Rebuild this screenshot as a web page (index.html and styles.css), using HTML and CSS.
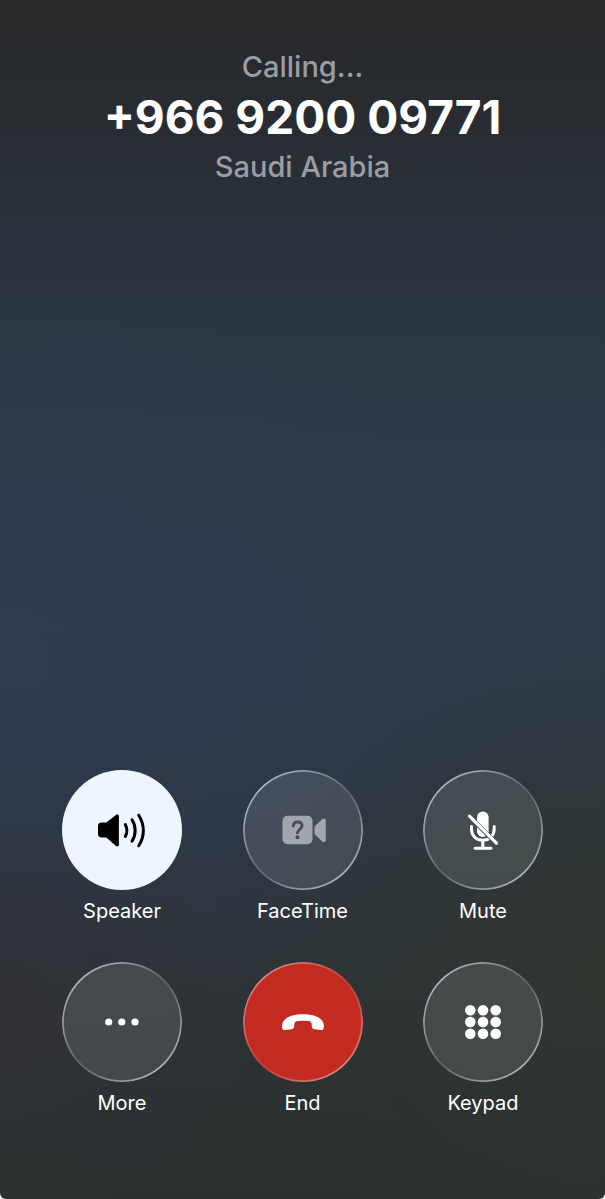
FILE: index.html
```html
<!DOCTYPE html>
<html lang="en">
<head>
  <meta charset="UTF-8" />
  <meta name="viewport" content="width=device-width, initial-scale=1.0" />
  <title>Calling...</title>
  <link rel="stylesheet" href="styles.css">
</head>
<body>
  <main class="call-screen">
    <!-- ===== caller ===== -->
    <header class="caller">
      <p class="caller-sub">Calling...</p>
      <h1 class="caller-number">+966 9200 09771</h1>
      <p class="caller-sub">Saudi Arabia</p>
    </header>

    <!-- ===== call controls ===== -->
    <div class="controls">
      <button type="button" class="control active">
        <span class="circle">
          <svg class="icon" viewBox="0 0 60 60" fill="none" stroke="#000" stroke-width="3" stroke-linecap="round">
            <path d="M9.500 22.500h4.800L24 14.900c1.200-.9 2.900-.3 2.900 1.300v28.600c0 1.600-1.700 2.200-2.900 1.200l-9.700-8.500H9.500C7.200 37.500 6 36.200 6 34v-8c0-2.200 1.200-3.500 3.500-3.500z" fill="#000" stroke="none" />
            <path d="M33.300 24.500c2 3.700 2 8.300 0 12" />
            <path d="M40 19.800c4.200 6.500 4.200 14.900 0 21.400" />
            <path d="M46.700 15.200c6.200 9.500 6.200 21.100 0 30.600" />
          </svg>
        </span>
        <span class="label">Speaker</span>
      </button>

      <button type="button" class="control" disabled>
        <span class="circle">
          <svg class="icon" viewBox="0 0 60 60" fill="#a2a5ac">
            <rect x="9.500" y="15.700" width="30" height="28.600" rx="5" />
            <path d="M41.500 26.500l7.700-7.300c1.400-1.200 3.600-.7 3.600 1.400v19.400c0 2.100-2.200 2.600-3.600 1.400l-7.700-7.300z" />
            <path d="M20.300 26c.2-2.600 1.900-4 4.300-4 2.600 0 4.400 1.500 4.400 3.800 0 3.600-4.500 3.600-4.500 7" fill="none" stroke="#46505b" stroke-width="3" stroke-linecap="round" />
            <circle cx="24.500" cy="37.200" r="2" fill="#46505b" />
          </svg>
        </span>
        <span class="label">FaceTime</span>
      </button>

      <button type="button" class="control">
        <span class="circle">
          <svg class="icon" viewBox="0 0 60 60" fill="none" stroke="#fff" stroke-width="3" stroke-linecap="round">
            <rect x="24" y="11.500" width="11.600" height="25.500" rx="5.800" fill="#fff" stroke="none" />
            <path d="M18.500 26.500v2.500c0 6.800 4.700 11.300 11.300 11.300S41.200 35.800 41.200 29v-2.500" />
            <path d="M29.800 40.500v7.500M22 48.200h16" />
            <path d="M18 18.200l27 26.600M14 14.200l4 4" stroke="#475055" stroke-width="4.500" stroke-linecap="butt" />
            <path d="M16.500 16.200l27 27" stroke-width="3.200" />
          </svg>
        </span>
        <span class="label">Mute</span>
      </button>

      <button type="button" class="control">
        <span class="circle">
          <svg class="icon" viewBox="0 0 60 60" fill="#fff">
            <circle cx="16.700" cy="30" r="3.600" />
            <circle cx="29.800" cy="30" r="3.600" />
            <circle cx="43" cy="30" r="3.600" />
          </svg>
        </span>
        <span class="label">More</span>
      </button>

      <button type="button" class="control end">
        <span class="circle">
          <svg class="icon" viewBox="0 0 60 60" fill="#fff">
            <path d="M30 22.200c7.300 0 13.500 1.500 17 4.200 3.400 2.600 4.400 6.200 3.700 9.500-.4 1.800-1.300 2.300-3 2.100l-6.300-.8c-1.500-.2-2.200-.9-2.400-2.300l-.5-3.400c-.2-1.200-.8-1.900-2-2.200-1.600-.4-3.700-.6-6.500-.6s-4.900.2-6.500.6c-1.200.3-1.800 1-2 2.200l-.5 3.400c-.2 1.400-.9 2.100-2.400 2.300l-6.300.8c-1.700.2-2.600-.3-3-2.100-.7-3.300.3-6.900 3.700-9.500 3.500-2.700 9.700-4.200 17-4.200z" />
          </svg>
        </span>
        <span class="label">End</span>
      </button>

      <button type="button" class="control">
        <span class="circle">
          <svg class="icon" viewBox="0 0 60 60" fill="#fff">
            <circle cx="17.300" cy="18.200" r="5.300" />
            <circle cx="30" cy="18.200" r="5.300" />
            <circle cx="42.700" cy="18.200" r="5.300" />
            <circle cx="17.300" cy="30" r="5.300" />
            <circle cx="30" cy="30" r="5.300" />
            <circle cx="42.700" cy="30" r="5.300" />
            <circle cx="17.300" cy="41.800" r="5.300" />
            <circle cx="30" cy="41.800" r="5.300" />
            <circle cx="42.700" cy="41.800" r="5.300" />
          </svg>
        </span>
        <span class="label">Keypad</span>
      </button>
    </div>
  </main>
</body>
</html>
```

FILE: styles.css
```css
body {
  margin: 0;
  font-family: Inter, 'Helvetica Neue', sans-serif;
  background-color: #fff;
}

.call-screen {
  min-height: 100vh;
  padding: 50px 62px 84px;
  box-sizing: border-box;
  display: flex;
  flex-direction: column;
  justify-content: space-between;
  border-radius: 0 0 6px 6px;
  background:
    radial-gradient(ellipse 60% 28% at 100% 80%, rgba(49, 54, 47, 0.85), rgba(49, 54, 47, 0)),
    radial-gradient(ellipse 45% 18% at 0% 84%, rgba(50, 49, 54, 0.8), rgba(50, 49, 54, 0)),
    radial-gradient(ellipse 90% 32% at 0% 55%, rgba(47, 59, 80, 0.7), rgba(47, 59, 80, 0)),
    linear-gradient(#272829 0%, #282b2f 8%, #2a3038 16%, #2c3640 26%, #2d3946 38%, #2e3a48 52%, #2d3846 63%, #2d363f 72%, #2d3437 82%, #2c3132 92%, #2c2f2f 100%);
}

/* caller */
.caller {
  text-align: center;
}
.caller-sub {
  margin: 0;
  font-size: 29px;
  font-weight: 500;
  line-height: 34px;
  color: #9b9da5;
}
.caller-number {
  margin: 0;
  font-size: 46px;
  font-weight: 700;
  line-height: 66px;
  color: #fff;
}

/* controls */
.controls {
  width: 100%;
  max-width: 560px;
  margin: 0 auto;
  display: grid;
  grid-template-columns: repeat(3, 120px);
  justify-content: space-between;
  row-gap: 39px;
}
.control {
  padding: 0;
  border: none;
  background: none;
  font-family: inherit;
  color: #fff;
  display: flex;
  flex-direction: column;
  align-items: center;
  gap: 9px;
  cursor: pointer;
}
.circle {
  position: relative;
  width: 120px;
  height: 120px;
  border-radius: 50%;
  background-color: rgba(255, 255, 255, 0.11);
  display: flex;
  justify-content: center;
  align-items: center;
}
/* thin rim, brighter at top left and bottom right */
.circle::before {
  content: '';
  position: absolute;
  inset: 0;
  border-radius: 50%;
  background: conic-gradient(rgba(208, 218, 228, 0.6), rgba(208, 218, 228, 0.15) 50deg, rgba(208, 218, 228, 0.55) 90deg, rgba(208, 218, 228, 0.75) 140deg, rgba(208, 218, 228, 0.55) 185deg, rgba(208, 218, 228, 0.2) 225deg, rgba(208, 218, 228, 0.55) 265deg, rgba(208, 218, 228, 0.75) 315deg, rgba(208, 218, 228, 0.6));
  -webkit-mask: radial-gradient(closest-side, transparent 96%, #000 98%);
  mask: radial-gradient(closest-side, transparent 96%, #000 98%);
}
.icon {
  width: 60px;
  height: 60px;
}
.label {
  font-size: 20px;
  line-height: 24px;
}
.control.active .circle {
  background-color: #edf6ff;
}
.control.active .circle::before {
  display: none;
}
.control.end .circle {
  background-color: #c42b20;
}
.control.end .circle::before {
  opacity: 0.7;
}
.control:disabled {
  cursor: default;
}

@media (max-width: 500px) {
  .call-screen {
    padding-left: 20px;
    padding-right: 20px;
  }
  .caller-number {
    font-size: 36px;
  }
  .controls {
    grid-template-columns: repeat(3, 88px);
  }
  .circle {
    width: 88px;
    height: 88px;
  }
}
```
